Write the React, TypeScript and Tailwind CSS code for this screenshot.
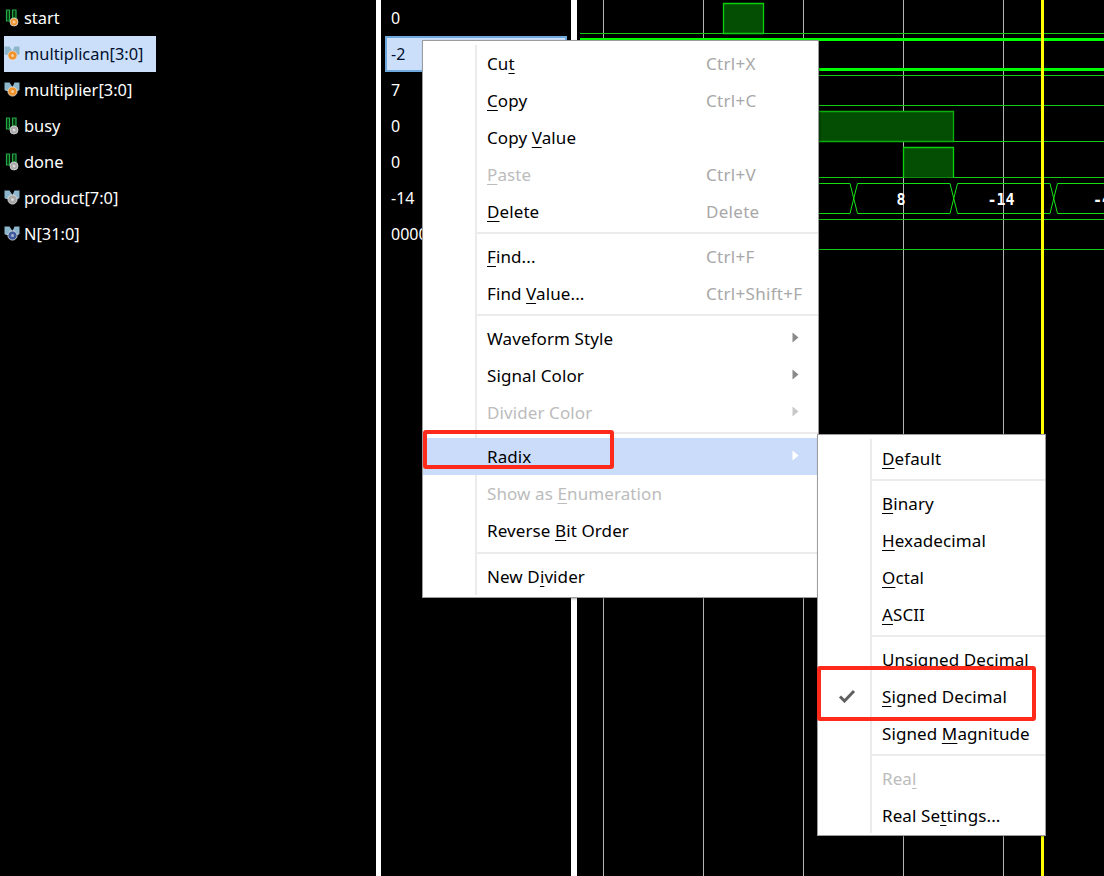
import React from 'react';

type SignalKind = 'bit' | 'bus';

const signals: { name: string; value: string; kind: SignalKind; dot: string; selected?: boolean }[] = [
  { name: 'start', value: '0', kind: 'bit', dot: '#f0932b' },
  { name: 'multiplican[3:0]', value: '-2', kind: 'bus', dot: '#f0932b', selected: true },
  { name: 'multiplier[3:0]', value: '7', kind: 'bus', dot: '#f0932b' },
  { name: 'busy', value: '0', kind: 'bit', dot: '#a8a8a8' },
  { name: 'done', value: '0', kind: 'bit', dot: '#a8a8a8' },
  { name: 'product[7:0]', value: '-14', kind: 'bus', dot: '#a8a8a8' },
  { name: 'N[31:0]', value: '00000000', kind: 'bus', dot: '#3f5c9e' },
];

const SignalIcon = ({ kind, dot }: { kind: SignalKind; dot: string }) => (
  <svg width="18" height="20" viewBox="0 0 18 20" className="shrink-0">
    {kind === 'bit' ? (
      <>
        <path d="M2.5 1v11h3V1ZM8.5 1v8h3.5V1Z" fill="#06330f" stroke="#22a845" strokeWidth="1.2" />
        <circle cx="10" cy="13" r="4" fill={dot} stroke="#dddddd" strokeWidth="0.8" />
      </>
    ) : (
      <>
        <path d="M0.5 1.5H5.5L8.5 6V10H2L0.5 9Z M15.5 1.5H10.5L8.5 6V10H14L15.5 9Z" fill="#8db6cc" />
        <circle cx="8.5" cy="10.5" r="4.6" fill={dot} stroke="#e4e4e4" strokeWidth="0.8" />
      </>
    )}
    <circle cx={kind === 'bit' ? 10 : 8.5} cy={kind === 'bit' ? 13 : 10.5} r="1.5" fill="#ffffff" fillOpacity="0.55" />
  </svg>
);

const Waveform = () => {
  const gridX = [603, 703, 803, 903.5, 1003.5];
  const rules = [33.5, 75.5, 105.5, 141.5, 177.5, 219.5, 249.5];
  return (
    <svg viewBox="577 0 527 876" className="h-full w-full" shapeRendering="crispEdges">
      {gridX.map((x) => (
        <line key={x} x1={x} x2={x} y1="0" y2="876" stroke="#b4b4b4" />
      ))}
      {rules.map((y) => (
        <line key={y} x1="580" x2="1104" y1={y} y2={y} stroke="#14cc14" />
      ))}
      <line x1="580" x2="1104" y1="39.5" y2="39.5" stroke="#00ff00" strokeWidth="3" />
      <line x1="580" x2="1104" y1="69.5" y2="69.5" stroke="#00ff00" strokeWidth="3" />
      <g shapeRendering="auto">
        <path d="M723.5 33.5V3.5H763.5V33.5Z" fill="#034e03" stroke="#0cd00c" strokeWidth="1.3" />
        <path d="M780 111.5H953.5V141.5H780Z" fill="#034e03" stroke="#0cb00c" strokeWidth="1.3" />
        <path d="M903.5 177.5V147.5H953.5V177.5" fill="#034e03" stroke="#0cd00c" strokeWidth="1.3" />
      </g>
      <g shapeRendering="auto" fill="none" stroke="#14e014" strokeWidth="1">
        <path d="M780 183.5H850L857.5 213.5H950L957.5 183.5H1050L1057.5 213.5H1104" />
        <path d="M780 213.5H850L857.5 183.5H950L957.5 213.5H1050L1057.5 183.5H1104" />
      </g>
      <g fontFamily="'DejaVu Sans Mono', monospace" fontWeight="700" fontSize="15" fill="#ffffff" shapeRendering="auto">
        <text x="901" y="205" textAnchor="middle">8</text>
        <text x="1001" y="205" textAnchor="middle">-14</text>
        <text x="1093" y="205">-4</text>
      </g>
      <rect x="1041" y="0" width="3" height="876" fill="#ffff00" />
    </svg>
  );
};

type MenuEntry =
  | { sep: string }
  | { before?: string; key?: string; after?: string; hint?: string; arrow?: boolean; off?: boolean; hot?: boolean; checked?: boolean };

const mainMenu: MenuEntry[] = [
  { before: 'Cu', key: 't', hint: 'Ctrl+X' },
  { key: 'C', after: 'opy', hint: 'Ctrl+C' },
  { before: 'Copy ', key: 'V', after: 'alue' },
  { key: 'P', after: 'aste', hint: 'Ctrl+V', off: true },
  { key: 'D', after: 'elete', hint: 'Delete' },
  { sep: 'h-[8px] pt-[2px]' },
  { key: 'F', after: 'ind...', hint: 'Ctrl+F' },
  { before: 'Find ', key: 'V', after: 'alue...', hint: 'Ctrl+Shift+F' },
  { sep: 'h-[8px] pt-[2px]' },
  { before: 'Waveform Style', arrow: true },
  { before: 'Signal Color', arrow: true },
  { before: 'Divider Color', arrow: true, off: true },
  { sep: 'h-[7px] pt-[1px]' },
  { before: 'Radix', arrow: true, hot: true },
  { before: 'Show as ', key: 'E', after: 'numeration', off: true },
  { before: 'Reverse ', key: 'B', after: 'it Order' },
  { sep: 'h-[9px] pt-[3px]' },
  { before: 'New D', key: 'i', after: 'vider' },
];

const radixMenu: MenuEntry[] = [
  { key: 'D', after: 'efault' },
  { sep: 'h-[8px] pt-[2px]' },
  { key: 'B', after: 'inary' },
  { key: 'H', after: 'exadecimal' },
  { key: 'O', after: 'ctal' },
  { key: 'A', after: 'SCII' },
  { sep: 'h-[8px] pt-[2px]' },
  { key: 'U', after: 'nsigned Decimal' },
  { key: 'S', after: 'igned Decimal', checked: true },
  { before: 'Signed ', key: 'M', after: 'agnitude' },
  { sep: 'h-[8px] pt-[2px]' },
  { before: 'Rea', key: 'l', off: true },
  { before: 'Real Se', key: 't', after: 'tings...' },
];

const Menu = ({ items, className }: { items: MenuEntry[]; className: string }) => (
  <div className={`absolute border border-[#9c9c9c] bg-white text-[17px] shadow-[1px_1px_2px_rgba(0,0,0,0.35)] ${className}`}>
    <div className="absolute top-[4px] bottom-[2px] left-[52px] w-[2px] bg-[#ebebeb]" />
    {items.map((item, i) => {
      if ('sep' in item) {
        return (
          <div key={i} className={`relative pl-[52px] ${item.sep}`}>
            <div className="h-[2px] bg-[#ebebeb]" />
          </div>
        );
      }
      return (
        <div
          key={i}
          className={`relative flex h-[37px] items-center pl-[64px] ${item.hot ? 'bg-[#cbdcfa]' : ''} ${item.off ? 'text-[#bcbcbc]' : 'text-black'}`}
        >
          {item.checked && (
            <svg width="18" height="14" viewBox="0 0 18 14" className="absolute left-[20px] top-[11px]">
              <path d="M2 7.5L6.5 12L16 2" fill="none" stroke="#606060" strokeWidth="3" />
            </svg>
          )}
          <span className="w-[219px] shrink-0 whitespace-pre tracking-[0.1px]">
            {item.before}
            {item.key && <span className="underline decoration-1 underline-offset-[3px]">{item.key}</span>}
            {item.after}
          </span>
          {item.hint && <span className="whitespace-nowrap tracking-[0.3px] text-[#a8a8a8]">{item.hint}</span>}
          {item.arrow && (
            <svg width="7" height="11" viewBox="0 0 7 11" className="absolute right-[19px] top-[12px]">
              <path
                d="M0.5 0.5L6.5 5.5L0.5 10.5Z"
                fill={item.hot ? '#ffffff' : item.off ? '#c8c8c8' : '#8a8a8a'}
              />
            </svg>
          )}
        </div>
      );
    })}
  </div>
);

export default function App() {
  return (
    <div className="relative flex h-[876px] w-[1104px] overflow-hidden bg-black font-['Noto_Sans',sans-serif] text-[16.4px]">
      {/* signal names */}
      <div className="w-[376px] shrink-0">
        {signals.map((s) => (
          <div key={s.name} className="flex h-[36px] items-start pl-[4px] pt-[1px]">
            <div
              className={`-mt-[1px] flex h-[36px] items-center gap-[2px] pr-[12px] pt-[1px] ${s.selected ? 'bg-[#cbdffb] text-[#00102e]' : 'text-white'}`}
            >
              <SignalIcon kind={s.kind} dot={s.dot} />
              <span>{s.name}</span>
            </div>
          </div>
        ))}
      </div>
      <div className="w-[5px] shrink-0 bg-white" />

      {/* values */}
      <div className="w-[190px] shrink-0 text-[16px]">
        {signals.map((s) =>
          s.selected ? (
            <div key={s.name} className="mx-[4px] flex h-[36px] items-center border-2 border-[#6ea8dd] bg-[#cbdffb] pl-[4px] text-[#00102e]">
              {s.value}
            </div>
          ) : (
            <div key={s.name} className="flex h-[36px] items-center pl-[10px] text-white">
              {s.value}
            </div>
          )
        )}
      </div>
      <div className="w-[6px] shrink-0 bg-white" />

      {/* waveform */}
      <div className="min-w-0 flex-1">
        <Waveform />
      </div>

      <Menu items={mainMenu} className="left-[422px] top-[40px] w-[397px] pt-[4px] pb-[2px]" />
      <Menu items={radixMenu} className="left-[817px] top-[434px] w-[229px] pt-[5px] pb-[1px]" />

      {/* red callouts */}
      <div className="absolute left-[423px] top-[430px] h-[39px] w-[191px] rounded-[3px] border-4 border-[#ff2a1a]" />
      <div className="absolute left-[817px] top-[666px] h-[55px] w-[219px] rounded-[3px] border-4 border-[#ff2a1a]" />
    </div>
  );
}
